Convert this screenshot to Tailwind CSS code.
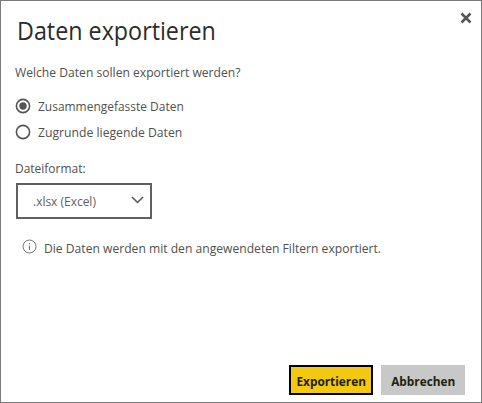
<!DOCTYPE html>
<html lang="de">
<head>
<meta charset="utf-8">
<title>Daten exportieren</title>
<script src="https://cdn.jsdelivr.net/npm/@tailwindcss/browser@4"></script>
</head>
<body class="bg-white">
<main class="relative flex h-[403px] w-[482px] flex-col border border-[#7b7b7b] bg-white pl-[14px] pr-[16px] pt-[13px] font-['Open_Sans','Noto_Sans',sans-serif] text-[13px] leading-5 text-[#505050]">
  <button class="absolute right-[9px] top-[11px] h-3 w-3" aria-label="Schließen">
    <svg class="block" width="12" height="12" viewBox="0 0 12 12" fill="none" stroke="#555" stroke-width="2.5"><path d="M1.5 1.5l9 9M10.5 1.5l-9 9"/></svg>
  </button>
  <h1 class="ml-[1.5px] origin-left scale-x-[0.932] whitespace-nowrap text-[25px] leading-8 text-[#2b2b2b]">Daten exportieren</h1>
  <p class="mt-4 origin-left scale-x-[0.932] whitespace-nowrap">Welche Daten sollen exportiert werden?</p>
  <div class="mt-[14px] flex flex-col gap-1.5">
    <label class="flex h-5 items-center gap-[7px]">
      <svg width="16" height="16" viewBox="0 0 16 16"><circle cx="8" cy="8" r="6.6" fill="none" stroke="#555" stroke-width="1.6"/><circle cx="8" cy="8" r="3.7" fill="#555"/></svg>
      <span class="origin-left scale-x-[0.92]">Zusammengefasste Daten</span>
    </label>
    <label class="flex h-5 items-center gap-[7px]">
      <svg width="16" height="16" viewBox="0 0 16 16"><circle cx="8" cy="8" r="6.6" fill="none" stroke="#555" stroke-width="1.6"/></svg>
      <span class="origin-left scale-x-[0.938]">Zugrunde liegende Daten</span>
    </label>
  </div>
  <p class="mt-4 origin-left scale-x-[0.92]">Dateiformat:</p>
  <div class="ml-px mt-[5px] flex h-9 w-[136px] items-center justify-between border-2 border-[#606060] pl-[15px] pr-[6px] text-[#606060]">
    <span class="origin-left scale-x-[0.92]">.xlsx (Excel)</span>
    <svg class="mb-[3px]" width="13" height="8" viewBox="0 0 13 8" fill="none" stroke="#555" stroke-width="1.5"><path d="M1 1l5.5 5.5L12 1"/></svg>
  </div>
  <div class="mt-[19px] flex h-5 items-center gap-[7px] pl-[7px]">
    <svg class="mb-[3px]" width="15" height="15" viewBox="0 0 15 15" fill="none" stroke="#777"><circle cx="7.5" cy="7.5" r="6.5"/><path d="M7.5 6.5v4.5M7.5 4v1.3" stroke-width="1.1"/></svg>
    <span class="origin-left scale-x-[0.932] whitespace-nowrap">Die Daten werden mit den angewendeten Filtern exportiert.</span>
  </div>
  <div class="mb-[7px] mt-auto flex justify-end gap-2 font-bold text-[#221f0a]">
    <button class="flex h-[30px] w-[84px] items-center justify-center whitespace-nowrap border-2 border-black bg-[#f2c811] pt-px"><span class="scale-x-[0.91]">Exportieren</span></button>
    <button class="flex h-[30px] w-[84px] items-center justify-center whitespace-nowrap bg-[#c8c8c8] pt-px"><span class="scale-x-[0.91]">Abbrechen</span></button>
  </div>
</main>
</body>
</html>
